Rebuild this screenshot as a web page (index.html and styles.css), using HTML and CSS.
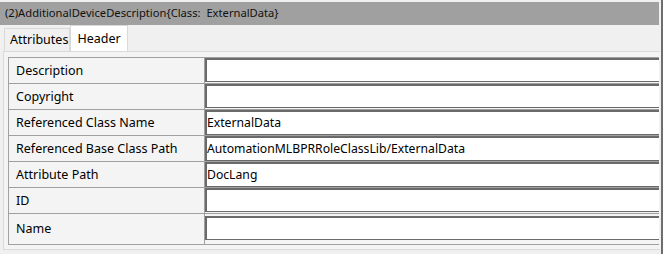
FILE: index.html
```html
<!DOCTYPE html>
<html lang="en">
<head>
  <meta charset="utf-8" />
  <title>AdditionalDeviceDescription – Header</title>
  <link rel="stylesheet" href="styles.css">
</head>
<body>
  <div class="frame">
    <!-- title bar -->
    <div class="title">(2)AdditionalDeviceDescription{Class:&nbsp; ExternalData}</div>

    <!-- tabs -->
    <div class="tabs">
      <div class="tab">Attributes</div>
      <div class="tab tab--active">Header</div>
    </div>

    <!-- header grid -->
    <div class="panel">
      <div class="props">
        <div class="prop"><div class="prop-name">Description</div><div class="prop-value"><span class="box"></span></div></div>
        <div class="prop"><div class="prop-name">Copyright</div><div class="prop-value"><span class="box"></span></div></div>
        <div class="prop"><div class="prop-name">Referenced Class Name</div><div class="prop-value"><span class="box">ExternalData</span></div></div>
        <div class="prop"><div class="prop-name">Referenced Base Class Path</div><div class="prop-value"><span class="box">AutomationMLBPRRoleClassLib/ExternalData</span></div></div>
        <div class="prop"><div class="prop-name">Attribute Path</div><div class="prop-value"><span class="box">DocLang</span></div></div>
        <div class="prop"><div class="prop-name">ID</div><div class="prop-value"><span class="box"></span></div></div>
        <div class="prop prop--last"><div class="prop-name">Name</div><div class="prop-value"><span class="box"></span></div></div>
      </div>
    </div>
  </div>
</body>
</html>
```

FILE: styles.css
```css
/* reset */
*,*::before,*::after{box-sizing:border-box;margin:0;padding:0;}

body{
  width:664px;height:254px;overflow:hidden;
  background:#fff;
  font-family:"Noto Sans","Open Sans",sans-serif;
  font-size:12.5px;color:#000;
}

.frame{
  width:663px;height:254px;
  background:#f0f0f0;
  border-right:2px solid #6e6e6e;
  display:flex;flex-direction:column;
}

/* title bar */
.title{
  margin-top:2px;
  width:659px;height:23px;line-height:22px;
  padding-left:5px;
  font-size:11.2px;
  background:#a0a0a0;color:#111;
  white-space:nowrap;
}

/* tabs */
.tabs{
  height:26px;
  padding-left:4px;
  display:flex;align-items:flex-end;
}
.tab{
  height:23px;line-height:21px;
  padding:0 1px 0 5px;
  background:#f0f0f0;
  border:1px solid #d9d9d9;border-bottom:0;
}
.tab--active{
  height:26px;line-height:26px;
  padding:0 6px 0 6px;
  background:#fff;
  border-color:#d9d9d9;
}

/* panel */
.panel{
  width:657px;
  margin-left:3px;
  height:199px;
  padding:5px 0 0 4px;
  background:#f4f4f4;
  border:1px solid #dadada;border-right:0;
}

.props{
  width:651px;
  border-left:1px solid #a0a0a0;
  border-top:1px solid #a0a0a0;
}
.prop{
  display:grid;
  grid-template-columns:196px 1fr;
  height:26px;
  border-bottom:1px solid #a0a0a0;
}
.prop--last{height:31px;}
.prop-name{
  padding-left:7px;
  line-height:25px;
  border-right:1px solid #a0a0a0;
  white-space:nowrap;
}
.prop--last .prop-name{line-height:30px;}

.prop-value{display:flex;}
.prop--last .prop-value{padding-top:2px;padding-bottom:3px;}
.box{
  flex:1;
  margin-bottom:1px;
  padding-left:0;
  font-size:12.2px;
  line-height:22px;
  background:#fff;
  border-top:2px solid #6a6a6a;
  border-left:2px solid #6a6a6a;
  border-bottom:1px solid #6a6a6a;
  white-space:nowrap;
}
```
